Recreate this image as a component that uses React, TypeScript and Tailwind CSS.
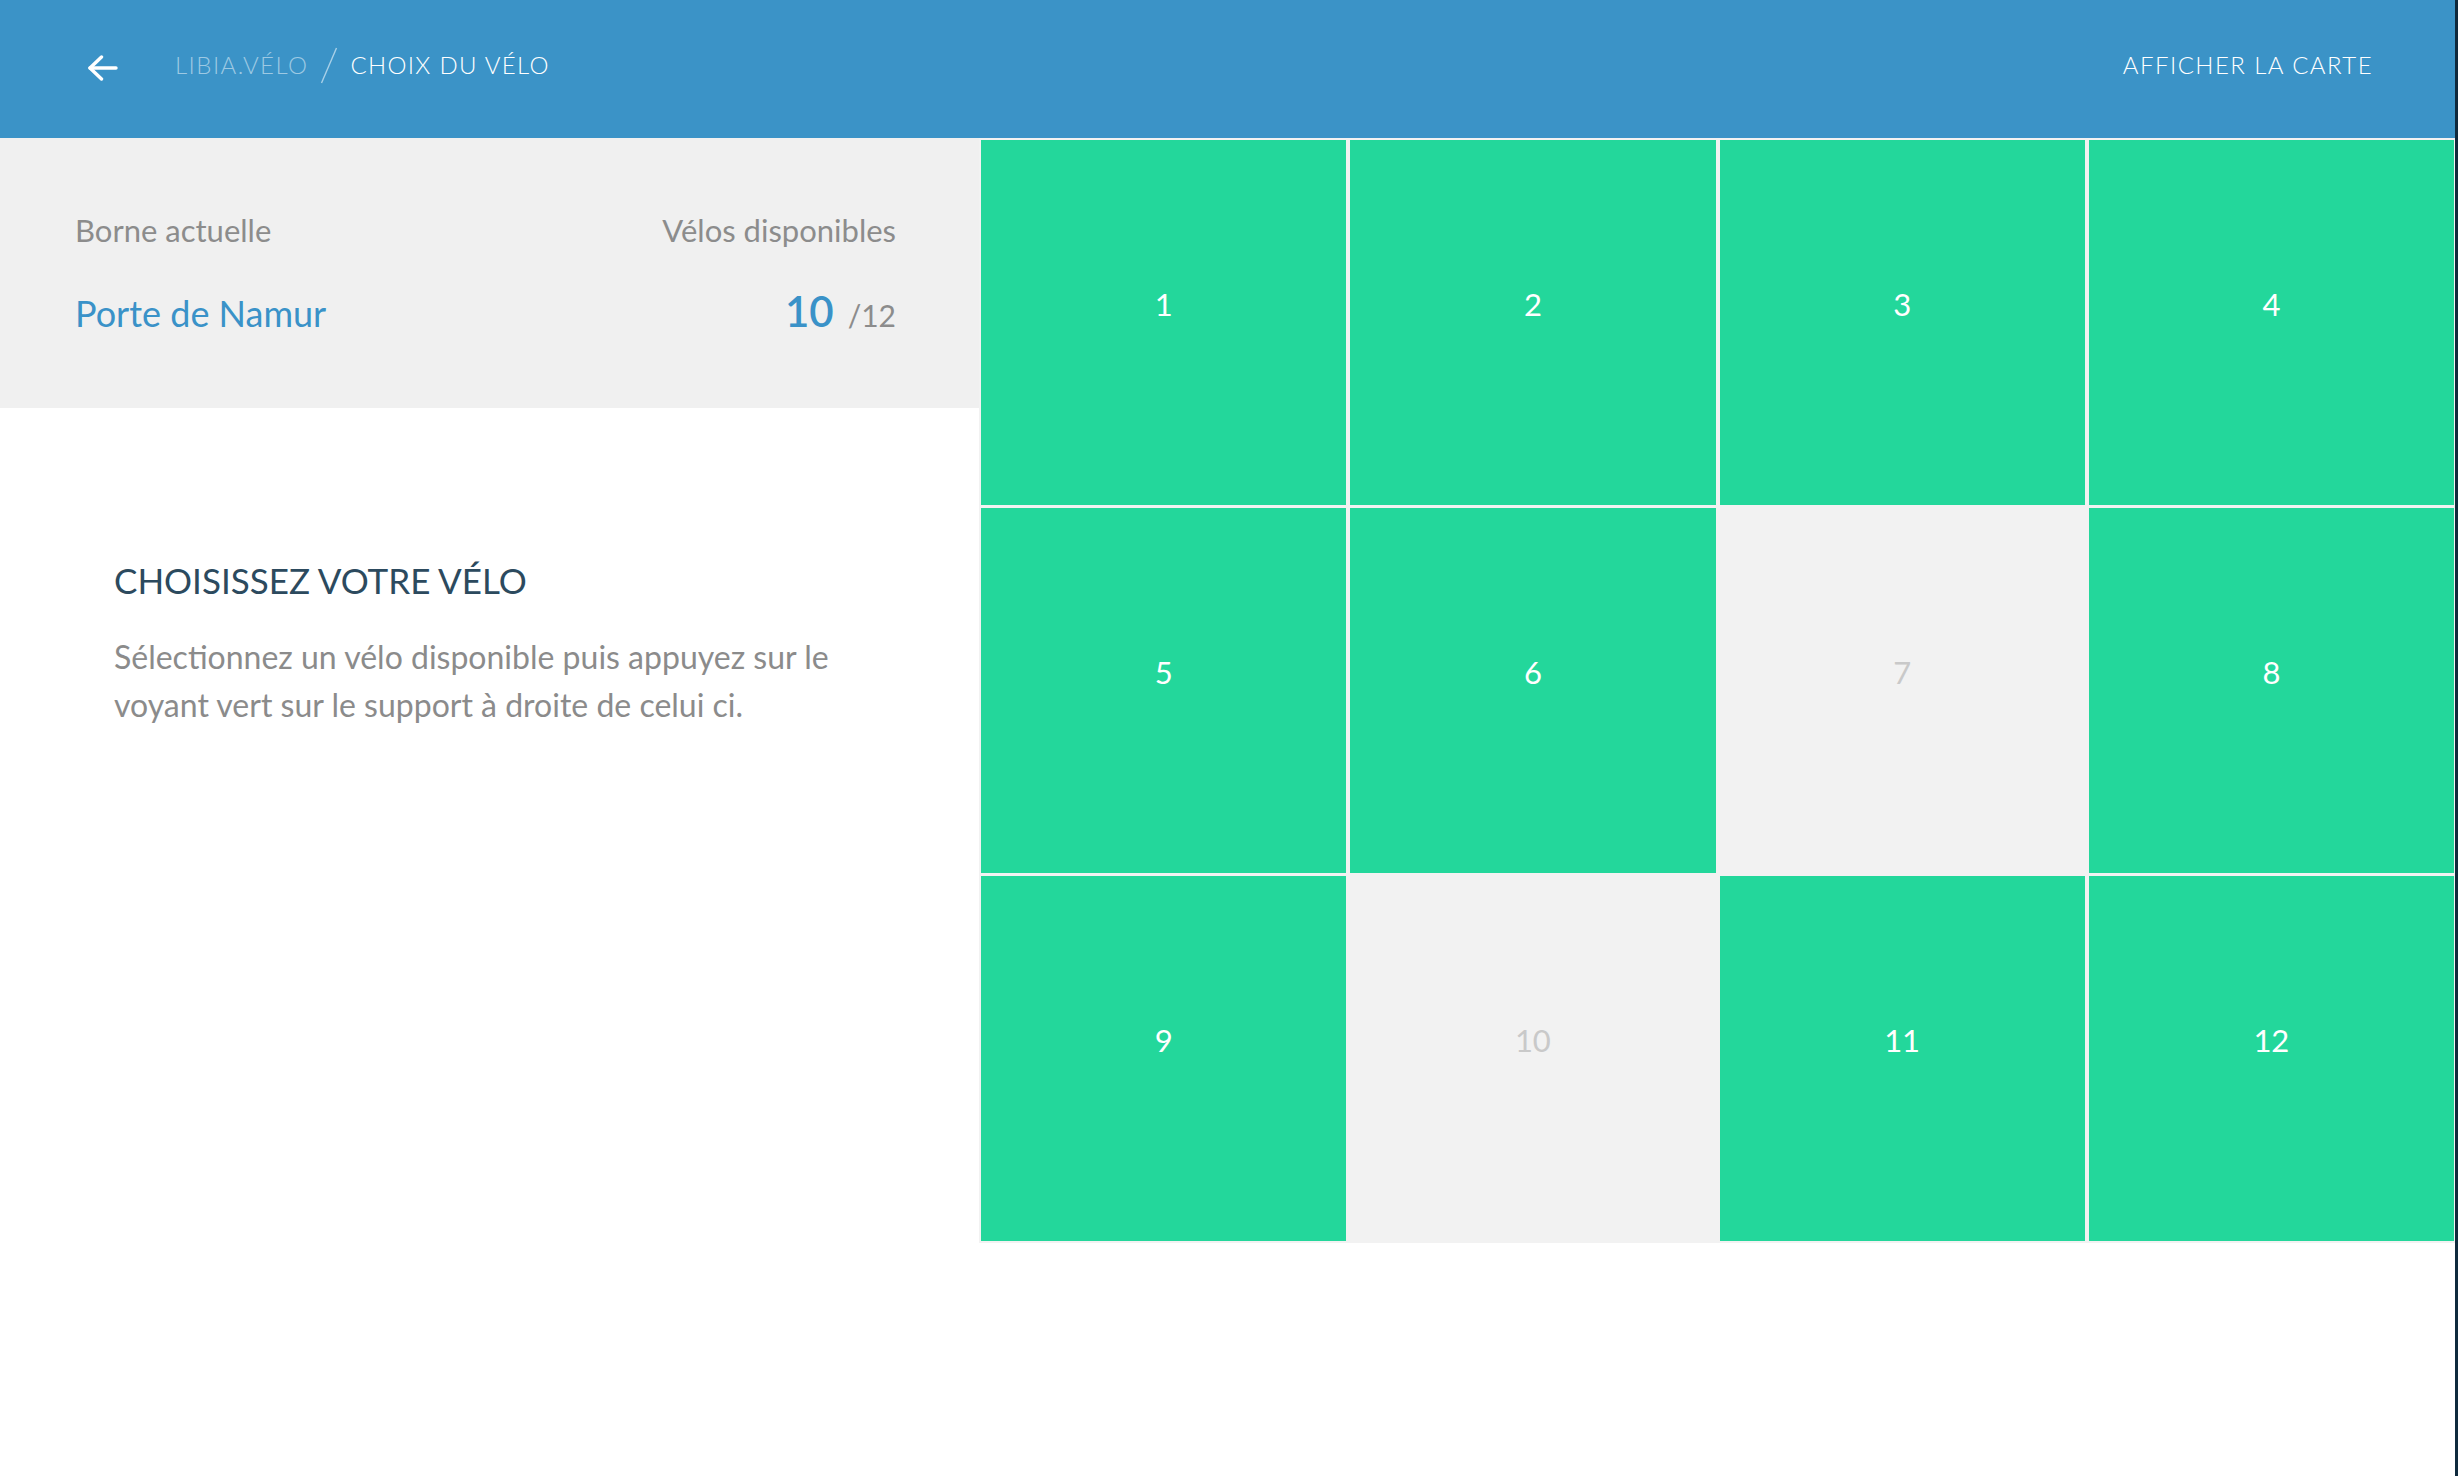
import React from 'react';

const font = { fontFamily: 'Lato, "Noto Sans", sans-serif' };

const bikes = Array.from({ length: 12 }, (_, i) => ({
  id: i + 1,
  available: ![7, 10].includes(i + 1),
}));

function BackArrow() {
  return (
    <svg width="30" height="26" viewBox="0 0 30 26" fill="none" stroke="white" strokeWidth="3.4" strokeLinecap="round" strokeLinejoin="round">
      <path d="M2 13H28" />
      <path d="M13.5 2 2 13l11.5 11" />
    </svg>
  );
}

function Header() {
  return (
    <header className="flex h-[138px] items-center justify-between bg-[#3b93c7] pb-[8px] pl-[88px] pr-[82px]">
      <div className="flex items-center">
        <button className="mt-[6px] flex items-center">
          <BackArrow />
        </button>
        <span className="ml-[57px] text-[24px] font-light tracking-[0.06em] text-[#9dc9e3]">LIBIA.VÉLO</span>
        <svg width="18" height="37" viewBox="0 0 18 37" className="ml-[12px]">
          <line x1="16.5" y1="1" x2="1.5" y2="36" stroke="#a9d0e8" strokeWidth="1.4" />
        </svg>
        <span className="ml-[12px] text-[24px] font-light tracking-[0.055em] text-white">CHOIX DU VÉLO</span>
      </div>
      <button className="text-[24px] font-light tracking-[0.06em] text-white">AFFICHER LA CARTE</button>
    </header>
  );
}

function StationPanel() {
  return (
    <div className="h-[270px] bg-[#f0f0f0] pl-[75px] pr-[83px] pt-[74px]">
      <div className="flex justify-between text-[31px] leading-[1.2] text-[#8c8c8c]">
        <span>Borne actuelle</span>
        <span>Vélos disponibles</span>
      </div>
      <div className="mt-[37px] flex items-baseline justify-between leading-[1.2]">
        <span className="text-[36px] text-[#3a92c8]">Porte de Namur</span>
        <span className="flex items-baseline gap-[14px]">
          <span className="text-[42px] font-semibold text-[#3a92c8]">10</span>
          <span className="text-[30px] text-[#8c8c8c]">/12</span>
        </span>
      </div>
    </div>
  );
}

function BikeGrid() {
  return (
    <div className="grid flex-1 grid-cols-4 gap-x-[4px] gap-y-[3px] self-start bg-[#f2f2f2] pb-[2px] pl-[2px] pr-[1px] pt-[2px]">
      {bikes.map((b) => (
        <button
          key={b.id}
          className={
            b.available
              ? 'flex h-[365px] items-center justify-center bg-[#23d79b] pb-[36px] text-[31px] text-white'
              : 'flex h-[365px] items-center justify-center bg-[#f2f2f2] pb-[36px] text-[31px] text-[#c9c9c9]'
          }
        >
          {b.id}
        </button>
      ))}
    </div>
  );
}

export default function App() {
  return (
    <div className="flex h-[1476px] w-full overflow-hidden bg-white" style={font}>
      <div className="flex min-w-0 flex-1 flex-col">
        <Header />
        <div className="flex">
          <div className="flex w-[979px] flex-col">
            <StationPanel />
            <div className="pl-[114px] pt-[151px]">
              <h1 className="text-[35px] leading-[1.2] text-[#2c4a5e]">CHOISISSEZ VOTRE VÉLO</h1>
              <p className="mt-[32px] text-[32px] leading-[48px] text-[#8b8b8b]">
                Sélectionnez un vélo disponible puis appuyez sur le
                <br />
                voyant vert sur le support à droite de celui ci.
              </p>
            </div>
          </div>
          <BikeGrid />
        </div>
      </div>
      <div className="w-[3px] bg-[#0f2a3d]" />
    </div>
  );
}
